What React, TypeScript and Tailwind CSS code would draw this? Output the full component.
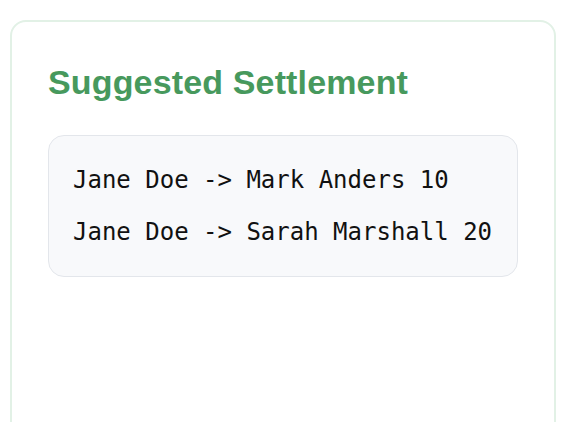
export default function App() {
  const lines = ["Jane Doe -> Mark Anders 10", "Jane Doe -> Sarah Marshall 20"];

  return (
    <div className="min-h-screen bg-white pt-[20px] pl-[10px]">
      <div className="w-[546px] h-[480px] rounded-2xl border-2 border-[#e2f1e6] bg-white px-[36px] pt-[40px]">
        <h2 className="text-[34px] leading-[40px] tracking-[0.15px] font-bold text-[#47995d] font-['Liberation_Sans',Arial,sans-serif]">
          Suggested Settlement
        </h2>
        <div className="mt-[33px] rounded-2xl border border-[#e3e6eb] bg-[#f8f9fb] px-[24px] py-[26px] flex flex-col gap-4">
          {lines.map((line) => (
            <p
              key={line}
              className="text-[24px] leading-[36px] text-[#111111] whitespace-pre font-['DejaVu_Sans_Mono','Liberation_Mono',monospace]"
            >
              {line}
            </p>
          ))}
        </div>
      </div>
    </div>
  );
}
